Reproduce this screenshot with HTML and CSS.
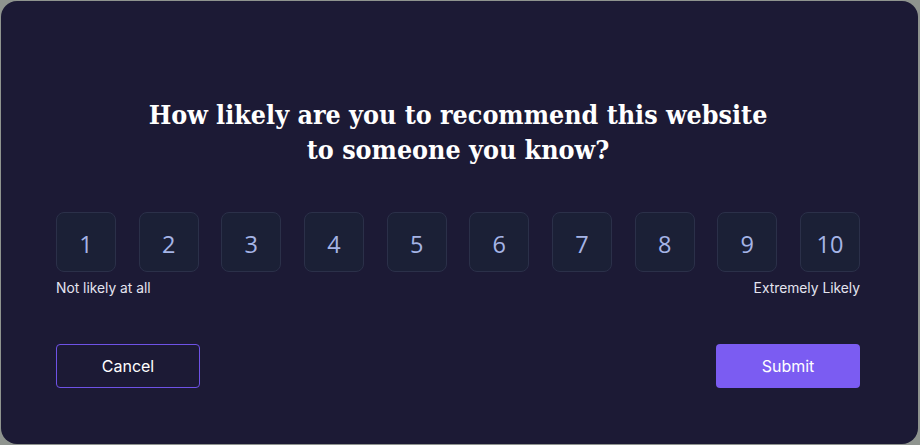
FILE: index.html
```html
<!DOCTYPE html>
<html>
<head>
<meta charset="utf-8">
<link rel="stylesheet" href="styles.css">
</head>
<body>
<div class="card">
  <h1 class="title">How likely are you to recommend this website<br>to someone you know?</h1>
  <div class="scale">
    <button class="num">1</button>
    <button class="num">2</button>
    <button class="num">3</button>
    <button class="num">4</button>
    <button class="num">5</button>
    <button class="num">6</button>
    <button class="num">7</button>
    <button class="num">8</button>
    <button class="num">9</button>
    <button class="num">10</button>
  </div>
  <div class="labels">
    <span>Not likely at all</span>
    <span>Extremely Likely</span>
  </div>
  <div class="actions">
    <button class="btn btn-cancel">Cancel</button>
    <button class="btn btn-submit">Submit</button>
  </div>
</div>
</body>
</html>
```
FILE: styles.css
```css
html, body {
  margin: 0;
  padding: 0;
  background: #8f948f;
  width: 920px;
  height: 445px;
  overflow: hidden;
}
.card {
  box-sizing: border-box;
  margin: 1px 2px 0 1px;
  height: 443px;
  background: #1c1a35;
  border-radius: 16px;
  padding: 96px 58px 0 55px;
}
.title {
  margin: 0;
  text-align: center;
  font-family: "DejaVu Serif Condensed", "DejaVu Serif", serif;
  font-weight: bold;
  font-size: 26.6px;
  line-height: 35px;
  color: #ffffff;
  letter-spacing: 0;
}
.scale {
  margin-top: 45px;
  display: flex;
  justify-content: space-between;
}
.num {
  box-sizing: border-box;
  width: 60px;
  height: 60px;
  border: 1px solid #2b3049;
  border-radius: 8px;
  background: #1b2036;
  color: #a5b4e6;
  font-family: "Open Sans", sans-serif;
  font-size: 23.5px;
  padding: 4px 0 0 0;
  display: flex;
  align-items: center;
  justify-content: center;
}
.labels {
  margin-top: 8px;
  display: flex;
  justify-content: space-between;
  font-family: Inter, sans-serif;
  font-size: 13.8px;
  line-height: 16px;
  color: #e4e4f0;
}
.actions {
  margin-top: 48px;
  display: flex;
  justify-content: space-between;
}
.btn {
  box-sizing: border-box;
  width: 144px;
  height: 44px;
  border-radius: 4px;
  font-family: Inter, sans-serif;
  font-size: 16px;
  color: #ffffff;
  padding: 0;
}
.btn-cancel {
  background: transparent;
  border: 1px solid #6e52e6;
}
.btn-submit {
  background: #7b5cf2;
  border: none;
}
```
